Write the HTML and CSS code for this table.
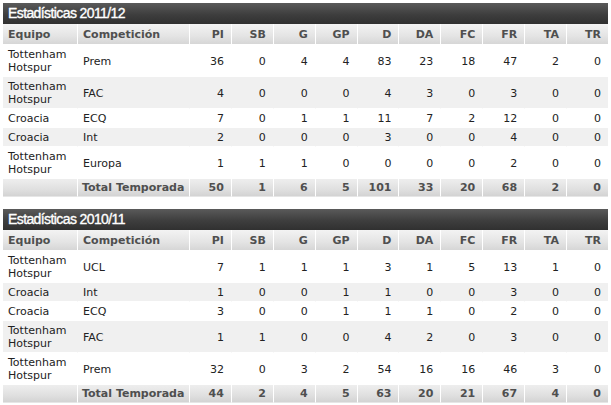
FILE: index.html
```html
<!DOCTYPE html>
<html lang="es">
<head>
<meta charset="utf-8">
<title>Estadísticas</title>
<link rel="stylesheet" href="styles.css">
</head>
<body>
<div class="page">
  <section class="block">
    <h2 class="title">Estadísticas 2011/12</h2>
    <table class="stats">
      <colgroup>
        <col class="c-team"><col class="c-comp">
        <col class="c-n"><col class="c-n"><col class="c-n"><col class="c-n"><col class="c-n">
        <col class="c-n"><col class="c-n"><col class="c-n"><col class="c-n"><col class="c-n">
      </colgroup>
      <thead>
        <tr><th class="l">Equipo</th><th class="l">Competición</th><th>PI</th><th>SB</th><th>G</th><th>GP</th><th>D</th><th>DA</th><th>FC</th><th>FR</th><th>TA</th><th>TR</th></tr>
      </thead>
      <tbody>
        <tr><td class="l">Tottenham<br>Hotspur</td><td class="l">Prem</td><td>36</td><td>0</td><td>4</td><td>4</td><td>83</td><td>23</td><td>18</td><td>47</td><td>2</td><td>0</td></tr>
        <tr class="alt"><td class="l">Tottenham<br>Hotspur</td><td class="l">FAC</td><td>4</td><td>0</td><td>0</td><td>0</td><td>4</td><td>3</td><td>0</td><td>3</td><td>0</td><td>0</td></tr>
        <tr><td class="l">Croacia</td><td class="l">ECQ</td><td>7</td><td>0</td><td>1</td><td>1</td><td>11</td><td>7</td><td>2</td><td>12</td><td>0</td><td>0</td></tr>
        <tr class="alt"><td class="l">Croacia</td><td class="l">Int</td><td>2</td><td>0</td><td>0</td><td>0</td><td>3</td><td>0</td><td>0</td><td>4</td><td>0</td><td>0</td></tr>
        <tr><td class="l">Tottenham<br>Hotspur</td><td class="l">Europa</td><td>1</td><td>1</td><td>1</td><td>0</td><td>0</td><td>0</td><td>0</td><td>2</td><td>0</td><td>0</td></tr>
      </tbody>
      <tfoot>
        <tr><td></td><td>Total Temporada</td><td>50</td><td>1</td><td>6</td><td>5</td><td>101</td><td>33</td><td>20</td><td>68</td><td>2</td><td>0</td></tr>
      </tfoot>
    </table>
  </section>

  <section class="block">
    <h2 class="title">Estadísticas 2010/11</h2>
    <table class="stats">
      <colgroup>
        <col class="c-team"><col class="c-comp">
        <col class="c-n"><col class="c-n"><col class="c-n"><col class="c-n"><col class="c-n">
        <col class="c-n"><col class="c-n"><col class="c-n"><col class="c-n"><col class="c-n">
      </colgroup>
      <thead>
        <tr><th class="l">Equipo</th><th class="l">Competición</th><th>PI</th><th>SB</th><th>G</th><th>GP</th><th>D</th><th>DA</th><th>FC</th><th>FR</th><th>TA</th><th>TR</th></tr>
      </thead>
      <tbody>
        <tr><td class="l">Tottenham<br>Hotspur</td><td class="l">UCL</td><td>7</td><td>1</td><td>1</td><td>1</td><td>3</td><td>1</td><td>5</td><td>13</td><td>1</td><td>0</td></tr>
        <tr class="alt"><td class="l">Croacia</td><td class="l">Int</td><td>1</td><td>0</td><td>0</td><td>1</td><td>1</td><td>0</td><td>0</td><td>3</td><td>0</td><td>0</td></tr>
        <tr><td class="l">Croacia</td><td class="l">ECQ</td><td>3</td><td>0</td><td>0</td><td>1</td><td>1</td><td>1</td><td>0</td><td>2</td><td>0</td><td>0</td></tr>
        <tr class="alt"><td class="l">Tottenham<br>Hotspur</td><td class="l">FAC</td><td>1</td><td>1</td><td>0</td><td>0</td><td>4</td><td>2</td><td>0</td><td>3</td><td>0</td><td>0</td></tr>
        <tr><td class="l">Tottenham<br>Hotspur</td><td class="l">Prem</td><td>32</td><td>0</td><td>3</td><td>2</td><td>54</td><td>16</td><td>16</td><td>46</td><td>3</td><td>0</td></tr>
      </tbody>
      <tfoot>
        <tr><td></td><td>Total Temporada</td><td>44</td><td>2</td><td>4</td><td>5</td><td>63</td><td>20</td><td>21</td><td>67</td><td>4</td><td>0</td></tr>
      </tfoot>
    </table>
  </section>
</div>
</body>
</html>
```

FILE: styles.css
```css
html, body {
  margin: 0;
  padding: 0;
  background: #ffffff;
}

.page {
  padding: 3px 3px 0 3px;
  display: flex;
  flex-direction: column;
  gap: 12px;
  width: 605px;
}

.block {
  display: flex;
  flex-direction: column;
}

.title {
  margin: 0;
  height: 21px;
  line-height: 21px;
  padding: 0 5px;
  font-family: "Liberation Sans", Arial, sans-serif;
  font-weight: normal;
  font-size: 14px;
  letter-spacing: -0.6px;
  color: #ffffff;
  -webkit-text-stroke: 0.35px #ffffff;
  background: linear-gradient(to bottom, #5a5a5a 0%, #3e3e3e 55%, #303030 100%);
}

.stats {
  width: 605px;
  border-collapse: separate;
  border-spacing: 0;
  table-layout: fixed;
  font-family: "DejaVu Sans", Verdana, sans-serif;
  font-size: 11px;
  line-height: 13px;
  color: #222222;
}

.c-team { width: 74px; }
.c-comp { width: 112px; }
.c-n { width: 41.9px; }

.stats th,
.stats td {
  text-align: right;
  padding: 3px 7px 3px 4px;
  border-left: 1px solid #ffffff;
  border-bottom: 1px solid #ffffff;
  white-space: nowrap;
}

.stats th:first-child,
.stats td:first-child {
  border-left: 0;
}

.stats .l {
  text-align: left;
  padding-left: 5px;
}

.stats thead th {
  height: 14px;
  padding-top: 3px;
  padding-bottom: 3px;
  font-weight: bold;
  color: #4f4f4f;
  background: linear-gradient(to bottom, #f3f3f3 0%, #e4e4e4 60%, #d6d6d6 100%);
}

.stats tbody td {
  padding-top: 3px;
  padding-bottom: 2px;
  background: #ffffff;
  border-left-color: transparent;
}

.stats tbody tr.alt td {
  background: #f0f0f0;
}

.stats tfoot td {
  height: 12px;
  padding-top: 2px;
  padding-bottom: 2px;
  font-weight: bold;
  color: #4f4f4f;
  background: linear-gradient(to bottom, #eeeeee 0%, #e0e0e0 60%, #d3d3d3 100%);
  border-bottom: 1px solid #e6e6e6;
}
```
